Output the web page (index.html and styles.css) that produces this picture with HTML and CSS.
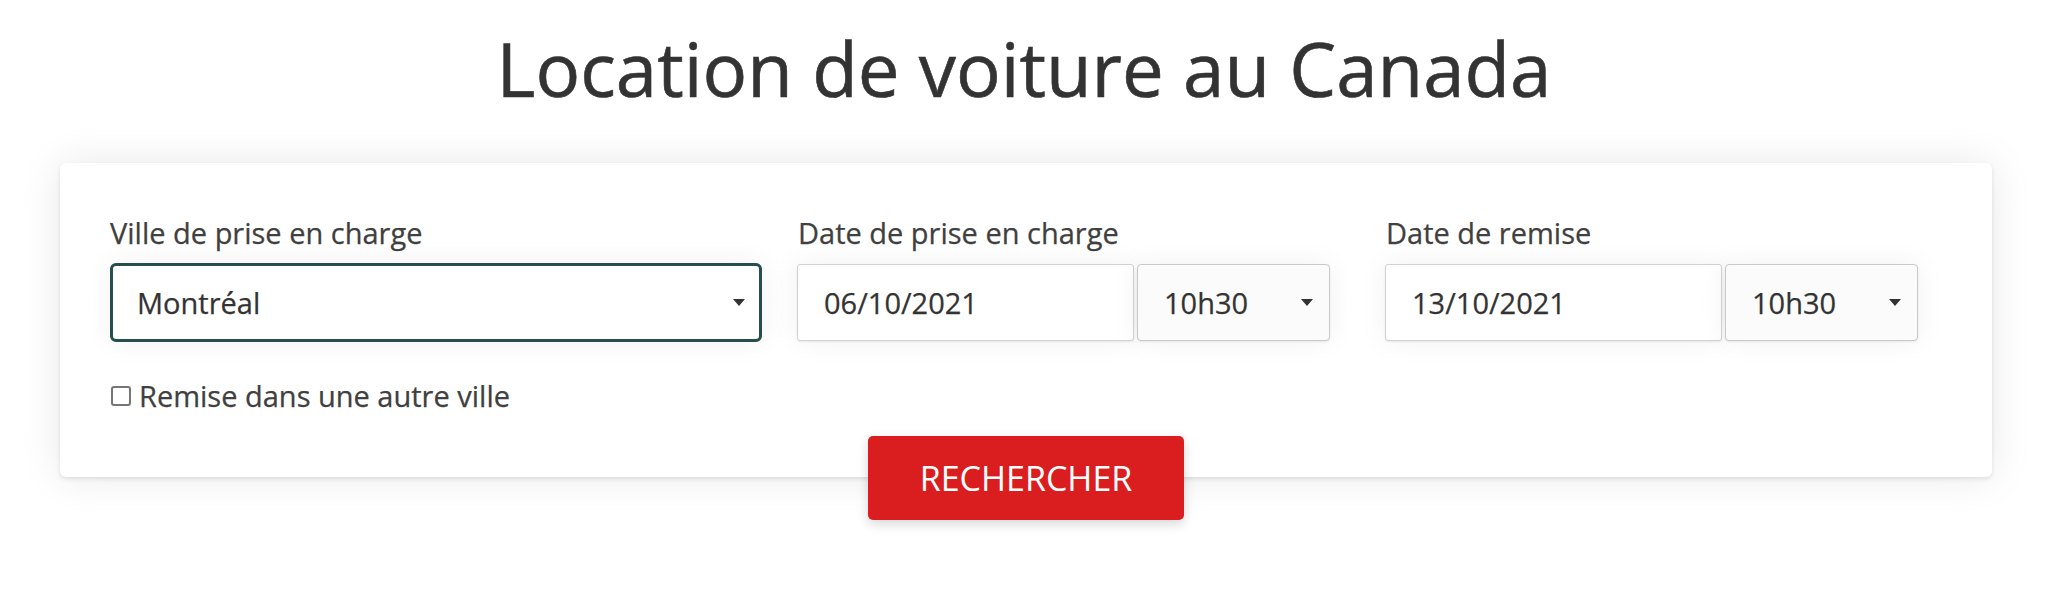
FILE: index.html
```html
<!DOCTYPE html>
<html lang="fr">
<head>
<meta charset="utf-8">
<title>Location de voiture au Canada</title>
<link rel="stylesheet" href="styles.css">
</head>
<body>
<h1 class="title">Location de voiture au Canada</h1>
<form class="card">
  <div class="fields">
    <div class="field field-city">
      <label class="label">Ville de prise en charge</label>
      <div class="select-wrap city">
        <select class="select select-focus"><option>Montréal</option></select>
        <svg class="arrow" viewBox="0 0 12 7" width="12" height="7"><path d="M0 0H12L6 7Z" fill="#333"/></svg>
      </div>
    </div>
    <div class="field field-date">
      <label class="label">Date de prise en charge</label>
      <div class="pair">
        <input class="input" type="text" value="06/10/2021">
        <div class="select-wrap time">
          <select class="select select-time"><option>10h30</option></select>
          <svg class="arrow" viewBox="0 0 12 7" width="12" height="7"><path d="M0 0H12L6 7Z" fill="#333"/></svg>
        </div>
      </div>
    </div>
    <div class="field field-return">
      <label class="label">Date de remise</label>
      <div class="pair">
        <input class="input" type="text" value="13/10/2021">
        <div class="select-wrap time">
          <select class="select select-time"><option>10h30</option></select>
          <svg class="arrow" viewBox="0 0 12 7" width="12" height="7"><path d="M0 0H12L6 7Z" fill="#333"/></svg>
        </div>
      </div>
    </div>
  </div>
  <label class="check-row"><input class="check" type="checkbox"><span>Remise dans une autre ville</span></label>
  <button class="btn" type="button">RECHERCHER</button>
</form>
</body>
</html>
```
FILE: styles.css
```css
html, body {
  margin: 0;
  padding: 0;
  background: #ffffff;
}
body {
  font-family: "Open Sans", "Liberation Sans", sans-serif;
  color: #333333;
  padding-bottom: 80px;
}
.title {
  margin: 0 0 43px 0;
  padding-top: 16px;
  font-size: 74.4px;
  line-height: 104px;
  font-weight: 400;
  text-align: center;
  color: #333333;
  -webkit-text-stroke: 0.6px #333333;
}
.card {
  box-sizing: border-box;
  width: 1932px;
  margin-left: 60px;
  padding: 51px 50px 0 50px;
  background: #ffffff;
  border-radius: 6px;
  box-shadow: 0 2px 4px rgba(0,0,0,0.10), 0 0 44px rgba(0,0,0,0.09);
  display: flex;
  flex-direction: column;
}
.fields {
  display: flex;
  align-items: flex-end;
}
.field {
  display: flex;
  flex-direction: column;
}
.field-city { width: 652px; margin-right: 35px; }
.field-date { width: 533px; margin-right: 55px; }
.field-return { width: 533px; }
.label {
  font-size: 29px;
  line-height: 38px;
  color: #404040;
  margin-bottom: 11px;
  -webkit-text-stroke: 0.25px #404040;
}
.field-date .label, .field-return .label { margin-left: 1px; }
.pair {
  display: flex;
  gap: 3px;
  height: 79px;
  align-items: center;
}
.select-wrap {
  position: relative;
  display: flex;
}
.select-wrap.city { height: 79px; }
.select-wrap.time { width: 193px; height: 77px; }
.select {
  appearance: none;
  -webkit-appearance: none;
  box-sizing: border-box;
  width: 100%;
  height: 100%;
  margin: 0;
  font-family: "Open Sans", "Liberation Sans", sans-serif;
  font-size: 29px;
  color: #333333;
  outline: none;
  -webkit-text-stroke: 0.25px #333333;
}
.select-focus {
  border: 3px solid #244f4c;
  border-radius: 6px;
  background: #ffffff;
  padding: 0 0 0 24px;
  box-shadow: 0 0 30px rgba(0,0,0,0.06);
}
.select-time {
  border: 1px solid #c9c9c9;
  border-radius: 4px;
  background: #fbfbfb;
  padding: 0 0 0 26px;
  box-shadow: 0 1px 2px rgba(0,0,0,0.08), 0 0 30px rgba(0,0,0,0.06);
}
.arrow {
  position: absolute;
  right: 17px;
  top: 50%;
  margin-top: -4px;
  pointer-events: none;
}
.input {
  box-sizing: border-box;
  width: 337px;
  height: 77px;
  margin: 0;
  border: 1px solid #d2d2d2;
  border-radius: 3px;
  background: #ffffff;
  padding: 0 0 0 26px;
  font-family: "Open Sans", "Liberation Sans", sans-serif;
  font-size: 29px;
  color: #333333;
  outline: none;
  -webkit-text-stroke: 0.25px #333333;
  box-shadow: 0 1px 2px rgba(0,0,0,0.08), 0 0 30px rgba(0,0,0,0.06);
}
.check-row {
  display: flex;
  align-items: center;
  margin-top: 35px;
  font-size: 29px;
  line-height: 38px;
  color: #404040;
  -webkit-text-stroke: 0.25px #404040;
}
.check {
  appearance: none;
  -webkit-appearance: none;
  box-sizing: border-box;
  width: 20px;
  height: 20px;
  margin: 0 8px 0 1px;
  border: 2px solid #767676;
  border-radius: 3px;
  background: #ffffff;
}
.btn {
  align-self: center;
  box-sizing: border-box;
  width: 316px;
  height: 84px;
  margin: 21px 0 -43px 0;
  border: none;
  border-radius: 5px;
  background: #da1e1f;
  color: #ffffff;
  font-family: "Open Sans", "Liberation Sans", sans-serif;
  font-size: 34px;
  font-weight: 400;
  box-shadow: 0 4px 12px rgba(0,0,0,0.16);
  cursor: pointer;
}
```
